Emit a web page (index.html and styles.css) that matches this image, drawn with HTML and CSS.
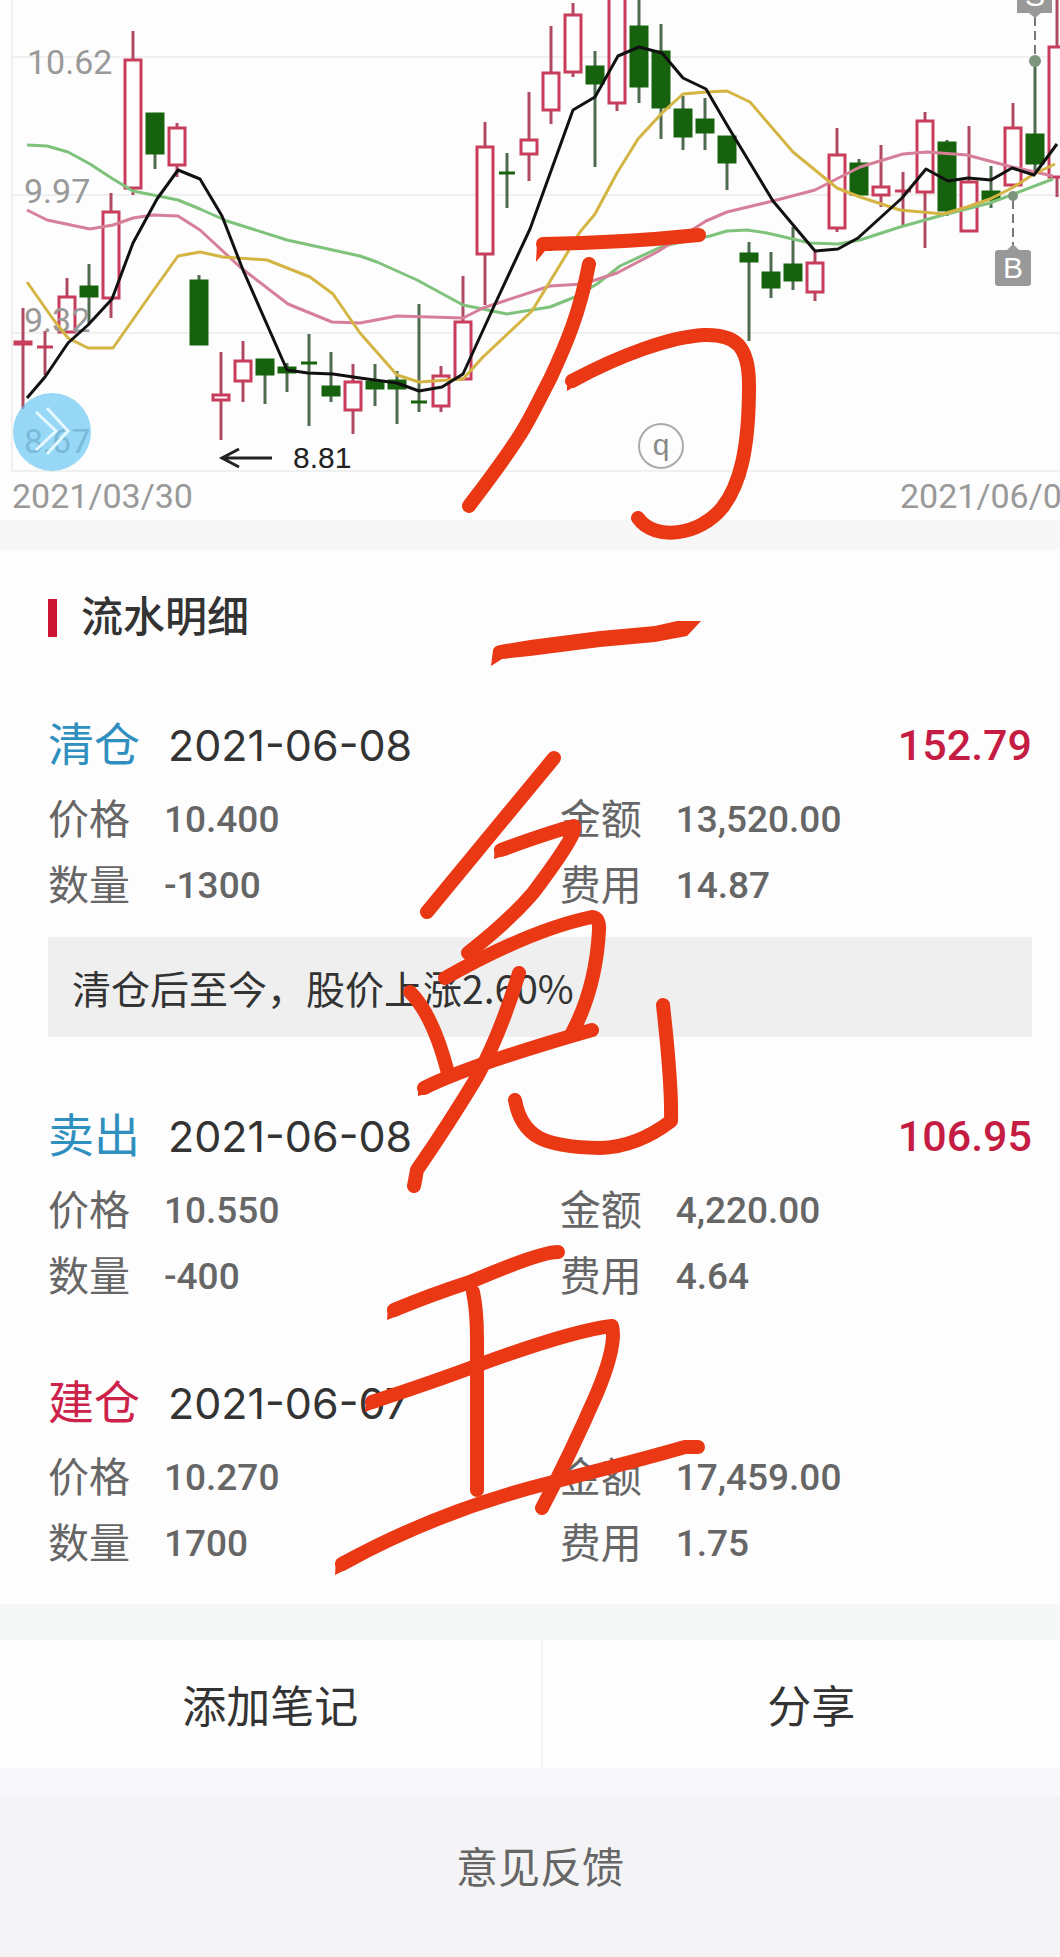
FILE: index.html
```html
<!DOCTYPE html>
<html lang="zh-CN">
<head>
<meta charset="utf-8">
<meta name="viewport" content="width=device-width, initial-scale=1">
<title>流水明细</title>
<link rel="stylesheet" href="styles.css">
</head>
<body>
<main class="page">
  <section class="chart" aria-label="K线图">
    <svg class="chart-svg" id="chart" viewBox="0 0 1060 520" role="img" aria-label="日K线与均线">
      <g class="grid">
        <path d="M12 0V471M12 57H1060M12 195H1060M12 333H1060M12 471H1060"/>
      </g>
      <g id="candles"></g>
      <g class="axis">
        <text x="27" y="74">10.62</text>
        <text x="24" y="203">9.97</text>
        <text x="24" y="332">9.32</text>
        <text x="24" y="453">8.67</text>
        <text x="12" y="508">2021/03/30</text>
        <text x="900" y="508">2021/06/0</text>
      </g>
      <polyline class="ma ma-green" points="27,145 47,146 68,152 90,164 113,179 133,191 178,200 200,209 227,221 287,240 360,256 377,262 417,280 463,305 507,314 550,307 575,297 597,284 620,266 663,246 710,236 727,231 747,230 767,233 810,243 838,244 860,240 900,227 943,215 990,203 1053,179"/>
      <polyline class="ma ma-pink" points="27,210 47,220 90,229 113,225 133,218 153,215 178,216 200,230 240,267 288,304 332,322 360,323 397,316 463,318 483,308 550,286 583,284 617,273 657,252 706,221 727,212 773,201 815,190 860,167 903,154 927,152 967,155 1012,167 1053,176"/>
      <polyline class="ma ma-yellow" points="27,282 53,319 68,338 88,348 113,348 153,291 178,256 200,252 223,257 267,260 310,277 333,294 360,333 397,375 419,382 463,379 483,357 532,311 580,232 595,214 617,173 638,139 662,113 683,94 706,92 727,91 750,102 793,152 837,188 860,197 900,210 943,214 967,207 990,199 1012,188 1034,174 1055,164"/>
      <polyline class="ma ma-black" points="27,398 45,377 68,343 88,325 112,299 133,243 157,199 178,170 200,179 222,216 243,270 287,370 308,373 333,374 360,378 397,383 419,391 442,387 463,374 495,304 530,229 573,110 595,97 618,56 639,47 662,53 683,78 706,89 727,125 773,201 815,251 838,249 858,238 902,198 926,169 948,181 968,178 991,180 1012,168 1034,175 1057,144"/>
      <g class="low">
        <path d="M272 458H222M239 449L222 458L239 467"/>
        <text x="293" y="468">8.81</text>
      </g>
      <g class="rights">
        <circle cx="661" cy="446" r="22"/>
        <text x="661" y="455">q</text>
      </g>
      <g class="marker">
        <path class="marker-line" d="M1035 17V58M1013 200V246"/>
        <circle cx="1035" cy="61" r="6"/>
        <circle cx="1013" cy="196" r="5"/>
        <path d="M1017 -23H1052V13H1041L1035 18L1029 13H1017Z"/>
        <path d="M998 250H1007L1013 244L1019 250H1028Q1031 250 1031 253V283Q1031 286 1028 286H998Q995 286 995 283V253Q995 250 998 250Z"/>
        <text x="1035" y="6">S</text>
        <text x="1013" y="278">B</text>
      </g>
      <g class="expand">
        <circle cx="52" cy="432" r="39"/>
        <path d="M36 412L56 431L36 450M47 408L68 431L47 454"/>
      </g>
    </svg>
  </section>

  <section class="detail">
    <h2 class="detail-title">流水明细</h2>

    <article class="entry">
      <header class="entry-head">
        <h3 class="tag tag-sell">清仓</h3>
        <time class="date" datetime="2021-06-08">2021-06-08</time>
        <strong class="profit">152.79</strong>
      </header>
      <dl class="facts">
        <div class="fact"><dt>价格</dt><dd>10.400</dd></div>
        <div class="fact"><dt>金额</dt><dd>13,520.00</dd></div>
        <div class="fact"><dt>数量</dt><dd>-1300</dd></div>
        <div class="fact"><dt>费用</dt><dd>14.87</dd></div>
      </dl>
      <p class="note">清仓后至今，股价上涨2.60%</p>
    </article>

    <article class="entry">
      <header class="entry-head">
        <h3 class="tag tag-sell">卖出</h3>
        <time class="date" datetime="2021-06-08">2021-06-08</time>
        <strong class="profit">106.95</strong>
      </header>
      <dl class="facts">
        <div class="fact"><dt>价格</dt><dd>10.550</dd></div>
        <div class="fact"><dt>金额</dt><dd>4,220.00</dd></div>
        <div class="fact"><dt>数量</dt><dd>-400</dd></div>
        <div class="fact"><dt>费用</dt><dd>4.64</dd></div>
      </dl>
    </article>

    <article class="entry">
      <header class="entry-head">
        <h3 class="tag tag-buy">建仓</h3>
        <time class="date" datetime="2021-06-07">2021-06-07</time>
      </header>
      <dl class="facts">
        <div class="fact"><dt>价格</dt><dd>10.270</dd></div>
        <div class="fact"><dt>金额</dt><dd>17,459.00</dd></div>
        <div class="fact"><dt>数量</dt><dd>1700</dd></div>
        <div class="fact"><dt>费用</dt><dd>1.75</dd></div>
      </dl>
    </article>
  </section>

  <div class="actions">
    <button class="action" type="button">添加笔记</button>
    <button class="action" type="button">分享</button>
  </div>

  <footer class="footer">
    <a class="feedback" href="#feedback">意见反馈</a>
  </footer>

  <svg class="ink" viewBox="0 0 1060 1600" aria-hidden="true">
    <path d="M543 244Q620 243 699 235"/>
    <path class="ink-tip" d="M536 262L537 243L546 237L552 251L545 251Z"/>
    <path d="M589 264C580 312 566 345 550 379C538 402 532 415 523 430C508 455 484 486 469 506"/>
    <path d="M572 381C620 355 670 337 704 335C735 334 749 345 749 385C749 450 740 485 722 508C700 535 655 542 638 518"/>
    <path class="ink-tip" d="M567 391L567 376L577 371L580 383Z"/>
    <path class="ink-tip" d="M491 666L493 650Q494 646 500 645L530 640L600 631L655 626L677 621L701 621L687 636L655 642L600 647L530 656L502 659Z"/>
    <path d="M554 758L427 912"/>
    <path d="M501 850Q550 832 574 826Q579 832 533 893Q510 920 468 953"/>
    <path class="ink-tip" d="M494 859L495 846L503 843L506 855Z"/>
    <path d="M445 978Q530 930 592 917Q600 918 599 930Q596 988 572 1033"/>
    <path d="M410 992Q433 1015 448 1073"/>
    <path d="M424 1088Q470 1065 592 1030"/>
    <path class="ink-tip" d="M418 1096L418 1085L427 1081L430 1093Z"/>
    <path d="M519 973Q500 1035 477 1077Q450 1122 417 1170L414 1186"/>
    <path d="M515 1100C522 1138 545 1147 600 1148Q637 1147 671 1121Q672 1085 663 1005"/>
    <path d="M394 1310Q430 1295 470 1282Q540 1252 558 1252"/>
    <path class="ink-tip" d="M387 1320L388 1307L397 1303L400 1315Z"/>
    <path d="M473 1292Q477 1310 477 1340V1490"/>
    <path d="M372 1402Q430 1383 473 1367Q570 1331 612 1326Q617 1345 597 1393Q570 1455 542 1508"/>
    <path class="ink-tip" d="M365 1412L366 1399L376 1395L378 1407Z"/>
    <path d="M342 1564Q440 1510 553 1482Q640 1460 685 1447L698 1447"/>
    <path class="ink-tip" d="M335 1575L336 1560L345 1555L349 1568Z"/>
  </svg>
</main>
<script src="chart.js"></script>
</body>
</html>
```
FILE: styles.css
```css
* {
  box-sizing: border-box;
}

body {
  margin: 0;
  background: #f4f4f6;
  color: #333;
  font-family: Roboto, "Noto Sans CJK SC", sans-serif;
}

h2, h3, p, dl, dd {
  margin: 0;
}

.page {
  position: relative;
  display: flex;
  flex-direction: column;
  min-height: 100vh;
  overflow: hidden;
}

/* chart */
.chart {
  background: #fdfdfd;
  border-bottom: 30px solid #f7f7f8;
}

.chart-svg {
  display: block;
  width: 100%;
}

.grid {
  fill: none;
  stroke: #f0f0f0;
  stroke-width: 2;
}

.axis {
  fill: #999;
  font-size: 34px;
}

.up {
  stroke: #c83c5c;
  stroke-width: 3;
  fill: #fdfdfd;
}

.down {
  stroke: #17630d;
  stroke-width: 3;
  fill: #17630d;
}

.wick {
  stroke: #4f6b50;
}

.up .wick {
  stroke: #b04a62;
}

.ma {
  fill: none;
  stroke-width: 3;
  stroke-linejoin: round;
}

.ma-green {
  stroke: #7fc27c;
}

.ma-pink {
  stroke: #d67f99;
}

.ma-yellow {
  stroke: #d4b544;
}

.ma-black {
  stroke: #111;
}

.low {
  fill: #222;
  font-family: "Liberation Sans", sans-serif;
  font-size: 30px;
}

.low path {
  fill: none;
  stroke: #222;
  stroke-width: 3;
}

.rights {
  fill: #888;
  font-family: "Liberation Sans", sans-serif;
  font-size: 30px;
  text-anchor: middle;
}

.rights circle {
  fill: #fdfdfd;
  stroke: #aaa;
  stroke-width: 2;
}

.marker {
  fill: #999;
  font-family: "Liberation Sans", sans-serif;
  font-size: 30px;
  text-anchor: middle;
}

.marker circle {
  fill: #7d947d;
}

.marker text {
  fill: #fff;
}

.marker-line {
  stroke: #777;
  stroke-width: 2;
  stroke-dasharray: 9 5;
}

.expand circle {
  fill: #6cc8f4;
  opacity: 0.7;
}

.expand path {
  fill: none;
  stroke: #e6f8ff;
  stroke-width: 3;
}

/* transaction details */
.detail {
  padding: 38px 28px 27px 48px;
  background: #fdfdfd;
}

.detail-title {
  display: flex;
  align-items: center;
  gap: 24px;
  margin-bottom: 67px;
  font-size: 42px;
  font-weight: 500;
  line-height: 60px;
}

.detail-title::before {
  content: "";
  width: 9px;
  height: 38px;
  background: #cc1433;
}

.entry + .entry {
  margin-top: 63px;
}

.entry-head {
  display: flex;
  align-items: center;
  gap: 28px;
  height: 60px;
  margin-bottom: 12px;
  line-height: 60px;
}

.tag {
  font-size: 46px;
  font-weight: 400;
}

.tag-sell {
  color: #2f8fbf;
}

.tag-buy {
  color: #cc2148;
}

.date {
  font-family: Inter, sans-serif;
  font-size: 43px;
}

.profit {
  margin-left: auto;
  color: #c41c42;
  font-size: 43px;
  font-weight: 500;
}

.facts {
  display: grid;
  grid-template-columns: 52% 1fr;
  color: #666;
  line-height: 66px;
}

.fact {
  display: flex;
  gap: 34px;
}

.fact dt {
  font-size: 41px;
}

.fact dd {
  font-size: 37px;
  font-weight: 500;
}

.note {
  margin: 18px 0 69px;
  padding: 20px 24px;
  background: #efefef;
  font-family: "Noto Sans CJK SC", sans-serif;
  font-size: 39px;
  line-height: 60px;
}

/* bottom actions */
.actions {
  display: grid;
  grid-template-columns: 51% 49%;
  border-top: 36px solid #f6f7f7;
  background: #fefefe;
}

.action {
  padding: 34px 0;
  border: 0;
  background: none;
  color: #333;
  font: 44px/60px "Noto Sans CJK SC", sans-serif;
}

.action + .action {
  padding-left: 20px;
  border-left: 2px solid #f5f5f5;
}

.footer {
  flex: 1;
  padding: 44px 0 58px 20px;
  border-top: 27px solid #f8f8fa;
  background: #f4f4f6;
  text-align: center;
}

.feedback {
  color: #666;
  font-size: 42px;
  line-height: 60px;
  text-decoration: none;
}

/* freehand marks over the page */
.ink {
  position: absolute;
  top: 0;
  left: 0;
  width: 100%;
  fill: none;
  stroke: #ea3714;
  stroke-width: 14;
  stroke-linecap: round;
  stroke-linejoin: round;
  pointer-events: none;
}

.ink-tip {
  fill: #ea3714;
  stroke: none;
}
```
FILE: chart.js
```js
// Each candle: [direction, high, body top, body bottom, low]; u = up, d = down.
const candles = [
  ["u", 308, 342, 344, 409], ["u", 331, 347, 347, 375], ["u", 278, 297, 332, 332],
  ["d", 264, 287, 296, 323], ["u", 193, 212, 298, 318], ["u", 31, 60, 188, 195],
  ["d", 114, 114, 153, 169], ["u", 123, 128, 165, 177], ["d", 275, 281, 344, 344],
  ["u", 352, 395, 400, 440], ["u", 341, 361, 381, 402], ["d", 360, 360, 374, 404],
  ["d", 363, 368, 372, 392], ["d", 334, 363, 363, 426], ["d", 352, 387, 395, 402],
  ["u", 364, 382, 410, 434], ["d", 364, 382, 388, 406], ["d", 371, 381, 388, 424],
  ["d", 304, 402, 402, 412], ["u", 366, 376, 406, 412], ["u", 276, 322, 379, 379],
  ["u", 122, 147, 254, 305], ["d", 153, 173, 173, 208], ["u", 92, 140, 154, 181],
  ["u", 26, 73, 110, 124], ["u", 3, 15, 72, 77], ["d", 51, 67, 83, 167],
  ["u", -9, -9, 103, 111], ["d", -9, 27, 86, 103], ["d", 24, 52, 107, 139],
  ["d", 96, 110, 136, 150], ["d", 98, 120, 132, 150], ["d", 137, 137, 162, 190],
  ["d", 242, 254, 261, 341], ["d", 252, 273, 287, 298], ["d", 227, 265, 280, 290],
  ["u", 252, 263, 292, 301], ["u", 128, 155, 228, 232], ["d", 159, 164, 194, 194],
  ["u", 145, 187, 195, 207], ["u", 172, 191, 191, 227], ["u", 112, 121, 192, 248],
  ["d", 140, 143, 210, 216], ["u", 126, 182, 231, 231], ["d", 166, 192, 199, 208],
  ["u", 103, 128, 185, 185], ["d", 62, 135, 163, 171], ["u", -9, 47, 177, 197]
];

const pitch = 22;
const half = 8;

document.getElementById("candles").innerHTML = candles.map(([dir, high, top, bottom, low], i) => {
  const x = 23 + i * pitch;
  const kind = dir === "u" ? "up" : "down";
  const body = top === bottom
    ? `<path d="M${x - half} ${top}H${x + half}"/>`
    : `<rect x="${x - half}" y="${top}" width="${half * 2}" height="${bottom - top}"/>`;
  return `<g class="${kind}"><path class="wick" d="M${x} ${high}V${low}"/>${body}</g>`;
}).join("");
```
